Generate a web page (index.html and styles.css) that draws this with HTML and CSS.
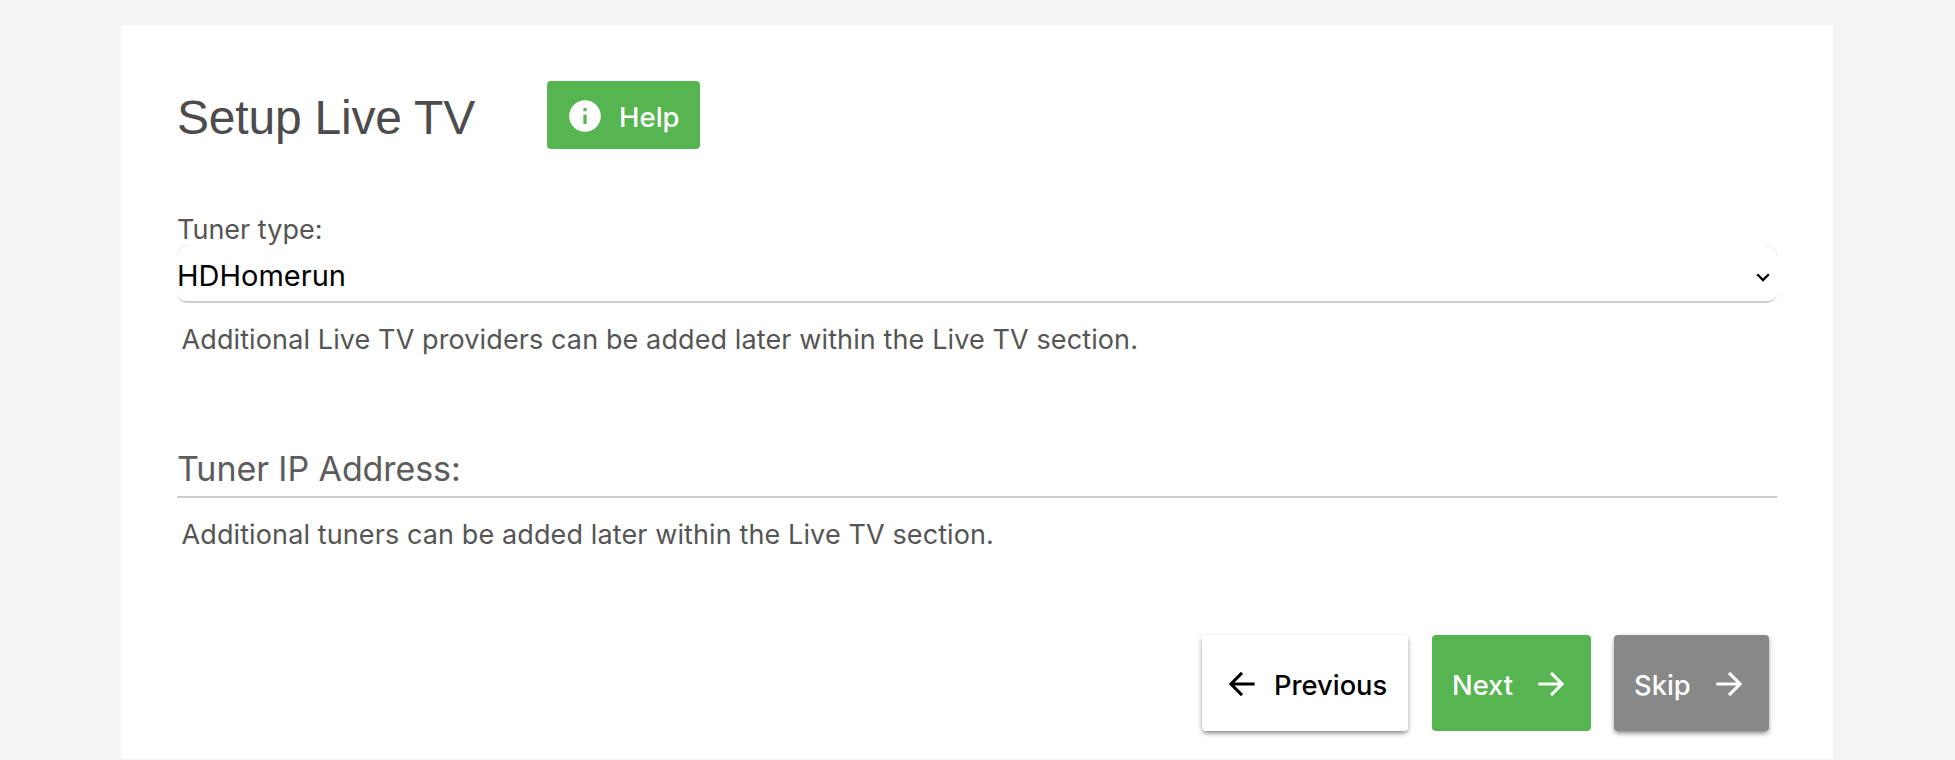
FILE: index.html
```html
<!DOCTYPE html>
<html lang="en">
<head>
<meta charset="utf-8">
<title>Setup Live TV</title>
<link rel="stylesheet" href="styles.css">
</head>
<body>
<main class="card">
  <header class="head">
    <h1 class="title">Setup Live TV</h1>
    <a class="btn btn-help" href="#">
      <svg class="icon" viewBox="0 0 24 24"><path fill="currentColor" d="M12 2C6.480 2 2 6.480 2 12s4.480 10 10 10 10-4.480 10-10S17.520 2 12 2zm1 15h-2v-6h2v6zm0-8h-2V7h2v2z"/></svg>
      <span class="help-text">Help</span>
    </a>
  </header>
  <form class="form">
    <label class="label"><span class="type-text">Tuner type:</span></label>
    <div class="select">
      <span class="select-text">HDHomerun</span>
      <svg class="chevron" viewBox="0 0 14 9"><path d="M1.200 1.200 7 7 12.800 1.200" fill="none" stroke="#000" stroke-width="2.300"/></svg>
    </div>
    <p class="desc"><span class="desc-a">Additional Live TV providers can be added later within the Live TV section.</span></p>
    <div class="input"><span class="ip-text">Tuner IP Address:</span></div>
    <p class="desc"><span class="desc-b">Additional tuners can be added later within the Live TV section.</span></p>
  </form>
  <footer class="actions">
    <a class="btn btn-prev" href="#">
      <svg class="icon" viewBox="0 0 24 24"><path d="M20 12H5.500M12 5 5 12l7 7" fill="none" stroke="currentColor" stroke-width="1.900"/></svg>
      <span class="prev-text">Previous</span>
    </a>
    <a class="btn btn-next" href="#">
      <span class="next-text">Next</span>
      <svg class="icon" viewBox="0 0 24 24"><path d="M4 12h14.500M12 5l7 7-7 7" fill="none" stroke="currentColor" stroke-width="1.900"/></svg>
    </a>
    <a class="btn btn-skip" href="#">
      <span class="skip-text">Skip</span>
      <svg class="icon" viewBox="0 0 24 24"><path d="M4 12h14.500M12 5l7 7-7 7" fill="none" stroke="currentColor" stroke-width="1.900"/></svg>
    </a>
  </footer>
</main>
</body>
</html>
```
FILE: styles.css
```css
* { box-sizing: border-box; }
body {
  margin: 0;
  height: 760px;
  padding: 25px 122px 0 121px;
  background: #f5f5f5;
  overflow: hidden;
  font-family: Inter, "Liberation Sans", sans-serif;
  font-size: 27px;
  color: #555;
  white-space: nowrap;
}
.card {
  height: 734px;
  padding: 56px 56px 0;
  background: #fff;
}
.head { display: flex; align-items: center; height: 68px; }
.title {
  width: 370px;
  margin: 0;
  padding-top: 6px;
  font: 400 48px/60px "Liberation Sans", Arial, sans-serif;
  letter-spacing: -0.2px;
  color: #4c4c4c;
}
.btn {
  display: flex;
  align-items: center;
  border-radius: 4px;
  font-size: 27.300px;
  font-weight: 500;
  color: #fff;
  text-decoration: none;
}
.icon { width: 38px; height: 38px; flex: none; }
.btn-help { width: 153px; height: 68px; padding-left: 19px; gap: 15px; font-size: 27.500px; background: #57b551; }
.btn-help .icon { margin-top: 2px; }
.help-text { padding-top: 4px; }
.label { display: block; height: 96px; padding-top: 65px; line-height: 32px; }
.select {
  position: relative;
  display: flex;
  align-items: center;
  justify-content: space-between;
  height: 58px;
  padding: 4px 7px 0 0;
  border-bottom: 2px solid #ccc;
  border-radius: 10px;
  color: #000;
  font-size: 29px;
}
/* faint highlights on the upper corners */
.select::before, .select::after {
  content: "";
  position: absolute;
  top: 0;
  width: 10px;
  height: 10px;
  border-top: 1px solid #ebebeb;
}
.select::before { left: 0; border-left: 1px solid #ebebeb; border-radius: 10px 0 0 0; }
.select::after { right: 0; border-right: 1px solid #ebebeb; border-radius: 0 10px 0 0; }
.chevron { width: 14px; height: 9px; margin-top: 5px; }
.desc { margin: 0; height: 73px; padding: 20px 0 0 4.500px; line-height: 33px; letter-spacing: 0.110px; }
.input {
  height: 122px;
  padding-top: 72px;
  border-bottom: 2px solid #ccc;
  font-size: 34px;
  line-height: 42px;
  letter-spacing: -0.080px;
  color: #5c5c5c;
}
.actions {
  display: flex;
  height: 160px;
  padding: 64px 8px 0 0;
  justify-content: flex-end;
}
.actions .btn { height: 96px; }
.actions span { padding-top: 5px; }
.actions .icon { margin-top: 2px; }
.btn-prev {
  width: 206px;
  margin-right: 24px;
  padding-left: 21px;
  gap: 13px;
  color: #000;
  background: #fff;
}
.btn-prev, .btn-skip { box-shadow: 0 3px 5px -1px rgba(0,0,0,.45), 0 1px 6px rgba(0,0,0,.10); }
.btn-next { width: 159px; margin-right: 23px; padding: 0 21px 0 20px; justify-content: space-between; background: #57b551; }
.btn-skip { width: 155px; padding: 0 21px 0 20px; justify-content: space-between; background: #888; }
```
